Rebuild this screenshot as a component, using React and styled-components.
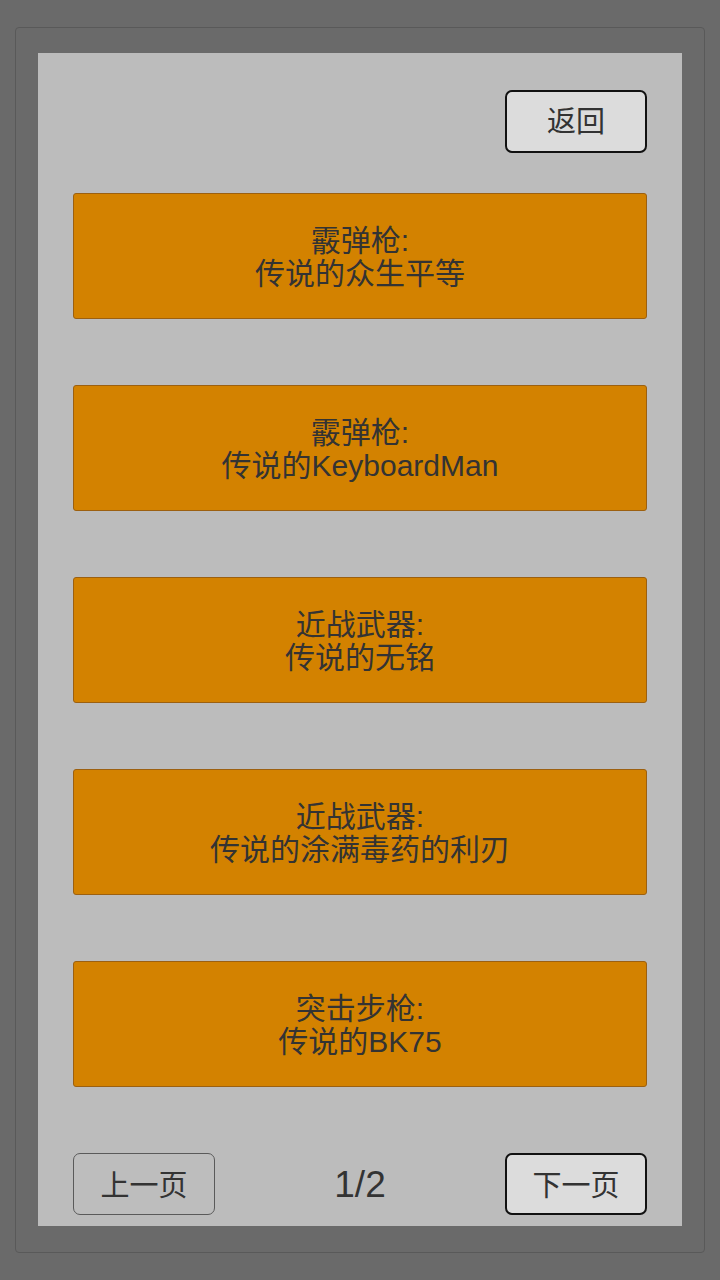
import React from 'react'
import styled, { createGlobalStyle } from 'styled-components'

const GlobalStyle = createGlobalStyle`
  html, body {
    margin: 0;
    padding: 0;
    background-color: #6a6a6a;
  }
  body {
    font-family: "Liberation Sans", "Noto Sans CJK SC", sans-serif;
  }
`;

const Screen = styled.div`
  width: 720px;
  height: 1280px;
  box-sizing: border-box;
  padding: 27px 15px;
`;

const Frame = styled.div`
  height: 100%;
  box-sizing: border-box;
  padding: 25px 22px 26px 22px;
  border: 1px solid #595959;
  border-radius: 4px;
  background-color: #6a6a6a;
`;

const Panel = styled.div`
  height: 100%;
  box-sizing: border-box;
  padding: 37px 35px 0 35px;
  background-color: #bcbcbc;
  display: flex;
  flex-direction: column;
`;

const TopBar = styled.div`
  display: flex;
  justify-content: flex-end;
  margin-bottom: 40px;
`;

const Button = styled.button`
  width: 142px;
  height: ${p => p.$h || 63}px;
  box-sizing: border-box;
  border: ${p => (p.$active ? '2px solid #111' : '1px solid #5a5a5a')};
  border-radius: 7px;
  background-color: ${p => (p.$active ? '#dcdcdc' : '#bdbdbd')};
  color: #333;
  font-family: "Liberation Sans", "Noto Sans CJK SC", sans-serif;
  font-size: 29px;
  padding: 0 0 ${p => p.$lift || 0}px 0;
  cursor: pointer;
`;

const List = styled.div`
  display: flex;
  flex-direction: column;
  gap: 66px;
`;

const Card = styled.div`
  height: 126px;
  box-sizing: border-box;
  background-color: #d38200;
  border: 1px solid #9c6010;
  border-radius: 3px;
  display: flex;
  flex-direction: column;
  align-items: center;
  justify-content: center;
  padding-top: 1px;
  color: #333;
  font-size: 30px;
  line-height: 33px;
  text-align: center;
`;

const Pager = styled.div`
  margin-top: 66px;
  display: flex;
  align-items: center;
  justify-content: space-between;
`;

const PageNum = styled.div`
  font-size: 37px;
  color: #333;
  padding-top: 2px;
`;

const items = [
  ['霰弹枪:', '传说的众生平等'],
  ['霰弹枪:', '传说的KeyboardMan'],
  ['近战武器:', '传说的无铭'],
  ['近战武器:', '传说的涂满毒药的利刃'],
  ['突击步枪:', '传说的BK75'],
]

const App = () => {
  return (
    <Screen>
      <GlobalStyle />
      <Frame>
        <Panel>
          <TopBar>
            <Button $active $lift={5}>返回</Button>
          </TopBar>
          <List>
            {items.map((it, i) => (
              <Card key={i}>
                <div>{it[0]}</div>
                <div>{it[1]}</div>
              </Card>
            ))}
          </List>
          <Pager>
            <Button $h={62} $lift={3}>上一页</Button>
            <PageNum>1/2</PageNum>
            <Button $active $h={62} $lift={3}>下一页</Button>
          </Pager>
        </Panel>
      </Frame>
    </Screen>
  )
}

export default App
